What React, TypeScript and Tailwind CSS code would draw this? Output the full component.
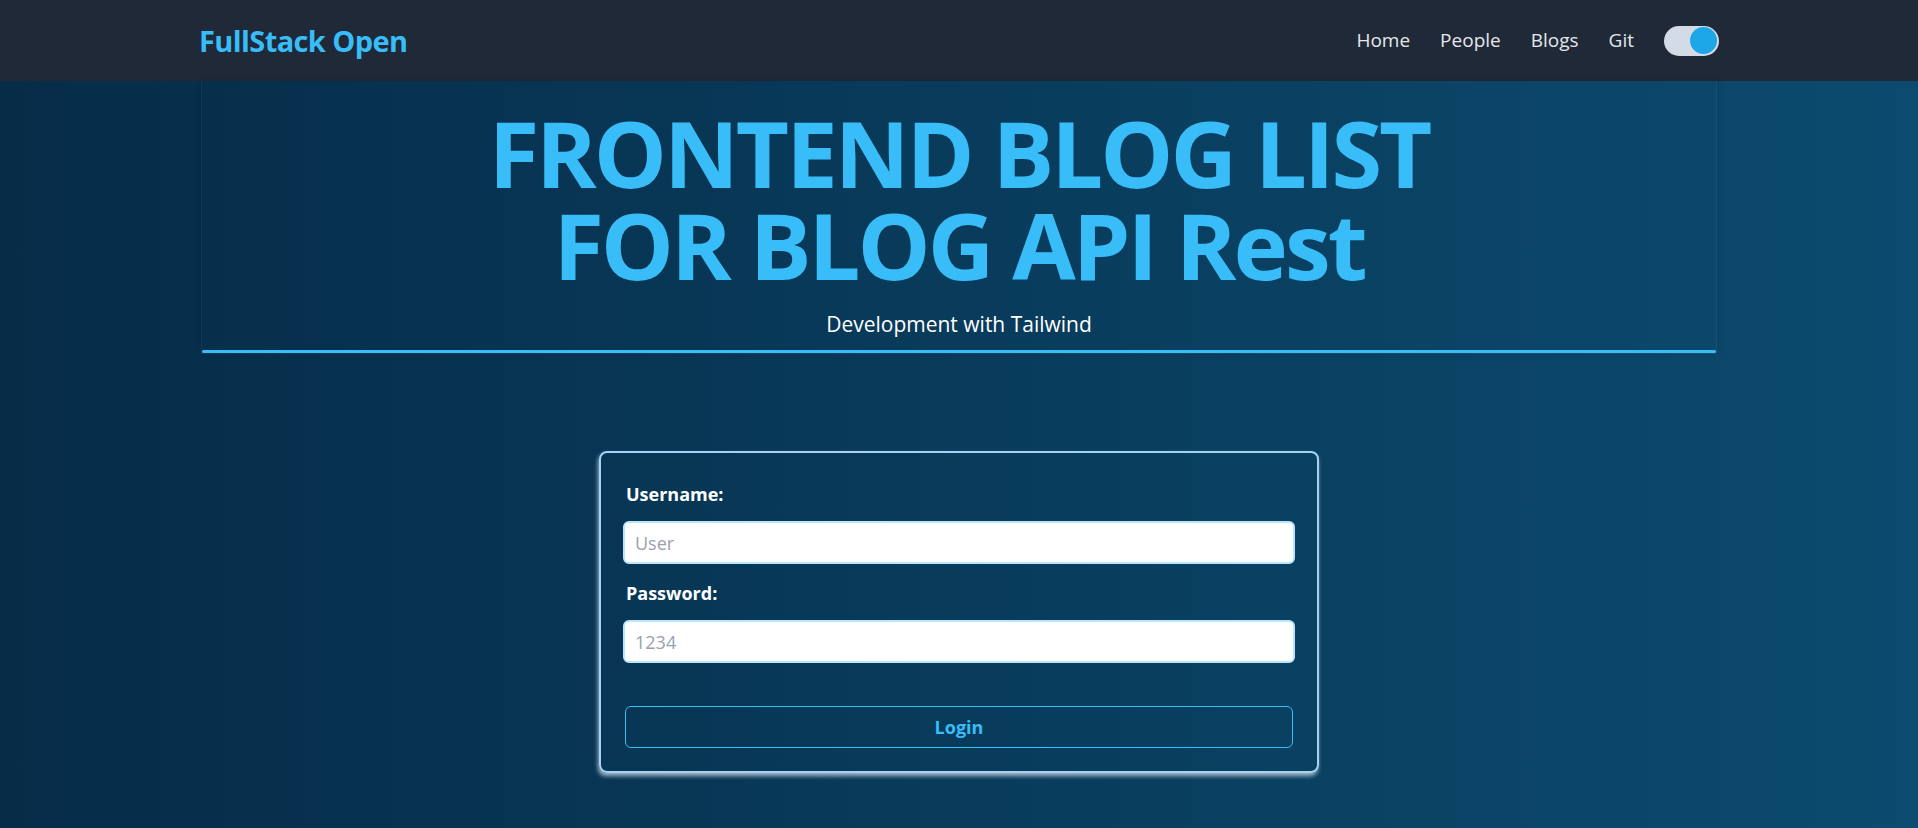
import { useState } from "react";

const links = ["Home", "People", "Blogs", "Git"];

const App = () => {
  const [dark, setDark] = useState(true);
  const [username, setUsername] = useState("");
  const [password, setPassword] = useState("");

  return (
    <div
      className="min-h-screen flex flex-col bg-gradient-to-r from-[#062c48] to-[#0c4b6f]"
      style={{ fontFamily: '"Open Sans", "Noto Sans", sans-serif' }}
    >
      {/* Navbar */}
      <nav className="h-[81px] bg-[#1f2937] shrink-0">
        <div className="w-[1520px] mx-auto h-full flex items-center justify-between">
          <a href="#" className="text-[29px] font-bold text-[#38bdf8] tracking-[-0.6px]">
            FullStack Open
          </a>
          <div className="flex items-center gap-[30px]">
            {links.map((link) => (
              <a key={link} href="#" className="text-[19px] text-gray-200">
                {link}
              </a>
            ))}
            <button
              onClick={() => setDark(!dark)}
              className="w-[55px] h-[30px] rounded-full bg-[#d3dbe6] flex items-center px-[2px] justify-end"
              aria-label="Toggle theme"
            >
              <span className="w-[27px] h-[27px] rounded-full bg-[#1ea7e8] block" />
            </button>
          </div>
        </div>
      </nav>

      {/* Header */}
      <header className="w-[1516px] mx-auto border border-t-0 border-white/5 shadow-[0_0_6px_rgba(0,0,0,0.15)] pt-[26px] text-center">
        <h1 className="text-[92px] leading-[92px] font-bold text-[#38bdf8] tracking-[-3px]">
          FRONTEND BLOG LIST
          <br />
          FOR BLOG API Rest
        </h1>
        <p className="mt-[19px] text-[21px] leading-[28px] text-white">
          Development with Tailwind
        </p>
        <div className="mt-[12px] h-[3px] rounded-full bg-[#38bdf8]" />
      </header>

      {/* Login form */}
      <form
        onSubmit={(e) => e.preventDefault()}
        className="mt-[97px] w-[720px] mx-auto rounded-lg border-2 border-[#a5d3f5] shadow-[-1px_3px_4px_rgba(205,215,228,0.8)] px-[22px] pt-[27px] pb-[23px]"
      >
        <label className="block text-[18px] leading-[28px] font-bold text-white mb-[13px] pl-[3px]">
          Username:
        </label>
        <input
          value={username}
          onChange={(e) => setUsername(e.target.value)}
          placeholder="User"
          className="w-full h-[43px] rounded-md border-2 border-[#bae6fd] bg-white px-[10px] text-[18px] text-gray-800 placeholder:text-gray-400 outline-none"
        />
        <label className="block mt-[15px] text-[18px] leading-[28px] font-bold text-white mb-[13px] pl-[3px]">
          Password:
        </label>
        <input
          type="password"
          value={password}
          onChange={(e) => setPassword(e.target.value)}
          placeholder="1234"
          className="w-full h-[43px] rounded-md border-2 border-[#bae6fd] bg-white px-[10px] text-[18px] text-gray-800 placeholder:text-gray-400 outline-none"
        />
        <div className="px-[2px]">
          <button
            type="submit"
            className="mt-[43px] w-full h-[42px] rounded-md border border-[#38bdf8] text-[#38bdf8] font-bold text-[18px]"
          >
            Login
          </button>
        </div>
      </form>
    </div>
  );
};

export default App;
